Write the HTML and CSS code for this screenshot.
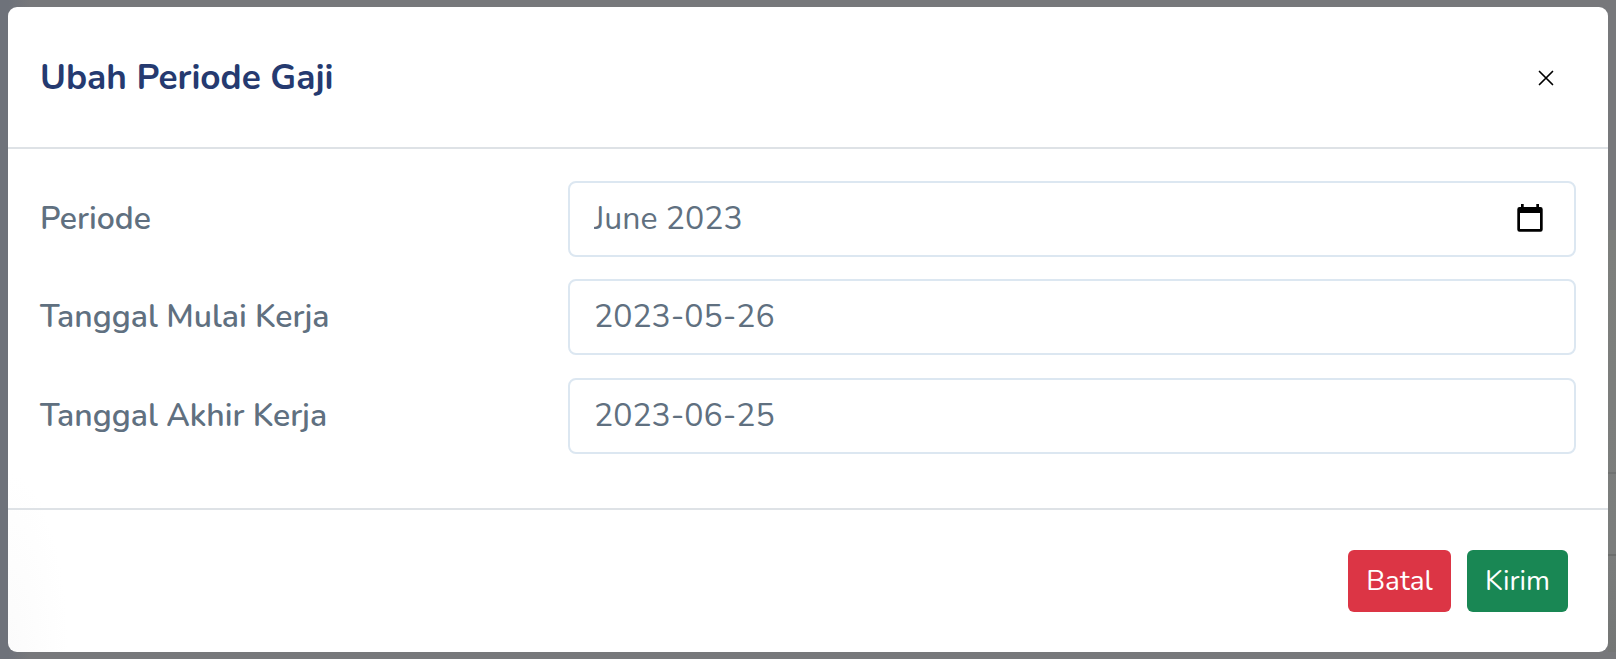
FILE: index.html
```html
<!DOCTYPE html>
<html lang="id">
<head>
<meta charset="utf-8">
<title>Ubah Periode Gaji</title>
<link rel="stylesheet" href="styles.css">
</head>
<body>
<main class="modal" role="dialog" aria-labelledby="title">
  <header class="modal-header">
    <h1 class="modal-title" id="title">Ubah Periode Gaji</h1>
    <button class="close" type="button" aria-label="Tutup">
      <svg width="16" height="16" viewBox="0 0 16 16"><path d="M1.500 1.500l13 13M14.500 1.500l-13 13"/></svg>
    </button>
  </header>
  <form class="modal-body">
    <div class="row">
      <label class="label" for="period">Periode</label>
      <div class="control">
        <input class="value" id="period" value="June 2023">
        <svg class="calendar" width="26" height="28" viewBox="0 0 26 28"><path fill-rule="evenodd" d="M4 0h2.700v3H19.300V0H22v3h1.500A2.200 2.200 0 0 1 25.700 5.200V25.500A2.200 2.200 0 0 1 23.500 27.700H2.500A2.200 2.200 0 0 1 .3 25.500V5.200A2.200 2.200 0 0 1 2.500 3H4zM3 9v16h20V9z"/></svg>
      </div>
    </div>
    <div class="row row-start">
      <label class="label" for="start">Tanggal Mulai Kerja</label>
      <div class="control"><input class="value" id="start" value="2023-05-26"></div>
    </div>
    <div class="row">
      <label class="label" for="end">Tanggal Akhir Kerja</label>
      <div class="control"><input class="value" id="end" value="2023-06-25"></div>
    </div>
  </form>
  <footer class="modal-footer">
    <button class="btn btn-danger" type="button">Batal</button>
    <button class="btn btn-success" type="button">Kirim</button>
  </footer>
</main>
<div class="page-edge"></div>
</body>
</html>
```
FILE: styles.css
```css
* { box-sizing: border-box; }
body {
  margin: 0;
  height: 659px;
  padding: 7px 8px;
  overflow: hidden;
  position: relative;
  background: linear-gradient(90deg, #6e727a 0, #6e727a 8px, #77787b 30px, #77787b 100%);
  font-family: Nunito, Lato, sans-serif;
}
.page-edge {
  position: absolute;
  z-index: -1;
  top: 230px;
  right: 0;
  width: 8px;
  height: 422px;
  background:
    linear-gradient(#707271, #707271) 0 242px / 8px 2px no-repeat,
    linear-gradient(#6c6e6d, #6c6e6d) 0 324px / 8px 2px no-repeat,
    linear-gradient(#7d7f7c, #7b7d7c 324px, #747675);
}
.modal {
  height: 645px;
  display: flex;
  flex-direction: column;
  border-radius: 9px;
  background: radial-gradient(60px 180px at 0 100%, #fbfbfb, #fff) no-repeat #fff;
}
.modal-header {
  height: 142px;
  flex: none;
  display: flex;
  align-items: center;
  justify-content: space-between;
  padding: 0 54px 0 32px;
  border-bottom: 2px solid #dee2e6;
}
.modal-title {
  margin: 0;
  font-size: 35.200px;
  line-height: 44px;
  font-weight: 700;
  color: #253a70;
}
.close {
  display: flex;
  margin-top: 2px;
  padding: 0;
  border: 0;
  background: none;
}
.close svg {
  fill: none;
  stroke: #000;
  stroke-width: 1.7;
  stroke-linecap: round;
}
.modal-body {
  height: 359px;
  flex: none;
  padding: 32px;
}
.row {
  display: grid;
  grid-template-columns: 528px 1fr;
  align-items: center;
}
.row-start { margin: 22px 0 23px; }
.label {
  font-size: 32px;
  line-height: 40px;
  font-weight: 600;
  color: #607080;
}
.control {
  height: 76px;
  display: flex;
  align-items: center;
  padding: 0 31px 0 24px;
  border: 2px solid #dce7f1;
  border-radius: 8px;
  background: #fff;
}
.value {
  flex: 1;
  min-width: 0;
  padding: 0;
  border: 0;
  outline: 0;
  background: none;
  font: 400 32px/40px Nunito, Lato, sans-serif;
  color: #607080;
}
.calendar { margin-bottom: 2px; }
.modal-footer {
  flex: 1;
  display: flex;
  align-items: center;
  justify-content: flex-end;
  gap: 16px;
  padding: 0 40px;
  border-top: 2px solid #dee2e6;
}
.btn {
  height: 62px;
  padding: 0;
  border: 0;
  border-radius: 6px;
  font: 400 28px/40px Nunito, Lato, sans-serif;
  color: #fff;
}
.btn-danger { width: 103px; background: #dc3545; }
.btn-success { width: 101px; background: #198754; }
```
